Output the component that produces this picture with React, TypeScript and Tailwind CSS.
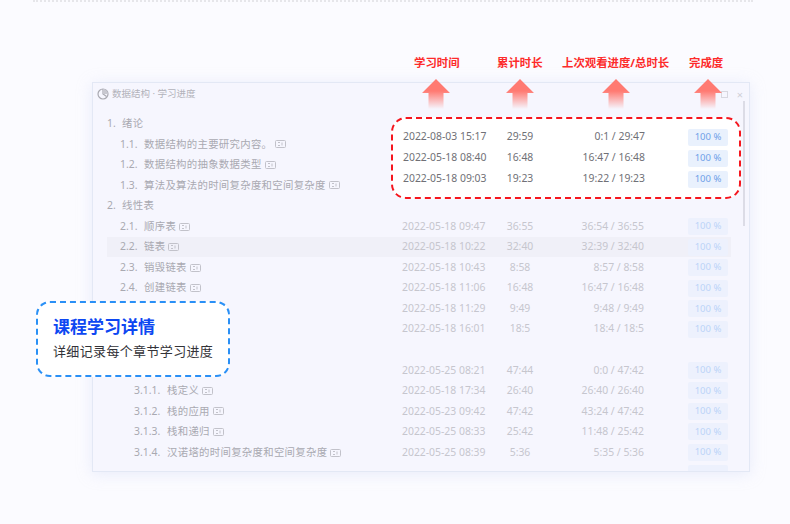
import React from "react";

const FONT = { fontFamily: '"Noto Sans", "Noto Sans CJK SC", sans-serif' };

type Row = {
  no?: string;
  label?: string;
  level: number;
  date?: string;
  dur?: string;
  prog?: string;
  active?: boolean;
  badgeOnly?: boolean;
  icon?: boolean;
};

const rows: Row[] = [
  { no: "1.", label: "绪论", level: 0 },
  { no: "1.1.", label: "数据结构的主要研究内容。", level: 1, icon: true },
  { no: "1.2.", label: "数据结构的抽象数据类型", level: 1, icon: true },
  { no: "1.3.", label: "算法及算法的时间复杂度和空间复杂度", level: 1, icon: true },
  { no: "2.", label: "线性表", level: 0 },
  { no: "2.1.", label: "顺序表", level: 1, icon: true, date: "2022-05-18 09:47", dur: "36:55", prog: "36:54 / 36:55" },
  { no: "2.2.", label: "链表", level: 1, icon: true, active: true, date: "2022-05-18 10:22", dur: "32:40", prog: "32:39 / 32:40" },
  { no: "2.3.", label: "销毁链表", level: 1, icon: true, date: "2022-05-18 10:43", dur: "8:58", prog: "8:57 / 8:58" },
  { no: "2.4.", label: "创建链表", level: 1, icon: true, date: "2022-05-18 11:06", dur: "16:48", prog: "16:47 / 16:48" },
  { level: 1, date: "2022-05-18 11:29", dur: "9:49", prog: "9:48 / 9:49" },
  { level: 1, date: "2022-05-18 16:01", dur: "18:5", prog: "18:4 / 18:5" },
  { level: 0 },
  { level: 1, date: "2022-05-25 08:21", dur: "47:44", prog: "0:0 / 47:42" },
  { no: "3.1.1.", label: "栈定义", level: 2, icon: true, date: "2022-05-18 17:34", dur: "26:40", prog: "26:40 / 26:40" },
  { no: "3.1.2.", label: "栈的应用", level: 2, icon: true, date: "2022-05-23 09:42", dur: "47:42", prog: "43:24 / 47:42" },
  { no: "3.1.3.", label: "栈和递归", level: 2, icon: true, date: "2022-05-25 08:33", dur: "25:42", prog: "11:48 / 25:42" },
  { no: "3.1.4.", label: "汉诺塔的时间复杂度和空间复杂度", level: 2, icon: true, date: "2022-05-25 08:39", dur: "5:36", prog: "5:35 / 5:36" },
  { level: 2, badgeOnly: true },
];

const highlighted = [
  { date: "2022-08-03 15:17", dur: "29:59", prog: "0:1 / 29:47" },
  { date: "2022-05-18 08:40", dur: "16:48", prog: "16:47 / 16:48" },
  { date: "2022-05-18 09:03", dur: "19:23", prog: "19:22 / 19:23" },
];

const headers = [
  { t: "学习时间", c: "left-[414px]" },
  { t: "累计时长", c: "left-[497px]" },
  { t: "上次观看进度/总时长", c: "left-[562px]" },
  { t: "完成度", c: "left-[689px]" },
];

const arrows = ["left-[422px]", "left-[506px]", "left-[602px]", "left-[694px]"];

function VideoIcon() {
  return (
    <svg width="11" height="8" viewBox="0 0 11 8" className="ml-[3px] shrink-0" fill="none">
      <rect x="0.5" y="0.5" width="10" height="7" rx="1" stroke="#c2c2ca" />
      <path d="M3 2.5h2M3 5.5h2M7 2.5v3" stroke="#c2c2ca" />
    </svg>
  );
}

function Arrow({ id }: { id: string }) {
  return (
    <svg width="28" height="30" viewBox="0 0 28 30">
      <defs>
        <linearGradient id={id} x1="0" y1="0" x2="0" y2="1">
          <stop offset="0.4" stopColor="#ff7a72" />
          <stop offset="1" stopColor="#ff7a72" stopOpacity="0" />
        </linearGradient>
      </defs>
      <path d="M14 0 L28 14 H21.5 V30 H6.5 V14 H0 Z" fill={`url(#${id})`} />
    </svg>
  );
}

export default function App() {
  return (
    <div
      className="relative w-[790px] h-[524px] overflow-hidden bg-[#fbfbff] flex flex-col"
      style={FONT}
    >
      <div className="mx-[33px] w-[720px] border-t-2 border-dotted border-[#e6e6ea]" />

      {/* main window */}
      <div className="ml-[92px] mt-[80px] w-[658px] h-[390px] overflow-hidden bg-[#f6f6fe] border border-[#e3e8f5] shadow-[0_2px_14px_rgba(200,210,240,0.35)] flex flex-col relative">
        <div className="h-[20px] shrink-0 flex items-center pl-[4px] pr-[6px] mt-[1px]">
          <svg width="12" height="12" viewBox="0 0 12 12" fill="none">
            <circle cx="6" cy="6" r="5" stroke="#a9a9b1" strokeWidth="1.2" />
            <path d="M6 1v5l3.6 2.6" stroke="#a9a9b1" strokeWidth="1.2" />
            <path d="M6 1a5 5 0 0 1 5 5H6Z" fill="#c8c8d0" />
          </svg>
          <span className="ml-[3px] text-[9.5px] text-[#b2b2ba]">数据结构 · 学习进度</span>
          <span className="ml-auto mr-[9px] w-[7px] h-[7px] border border-[#d8d8e0]" />
          <span className="text-[11px] leading-none text-[#d0d0d8]">×</span>
        </div>

        <div className="flex flex-col mt-[9.5px] ml-[14px] w-[624px]">
          {rows.map((r, i) => (
            <div
              key={i}
              className={`h-[20.55px] shrink-0 flex items-center text-[10.4px] ${r.active ? "bg-[#f0f0f8]" : ""}`}
            >
              <div className="w-[295px] shrink-0 flex items-center text-[#a9a9b1]">
                {r.level === 0 && r.no && (
                  <>
                    <span className="w-[15px]">{r.no}</span>
                    <span className="tracking-[0.3px]">{r.label}</span>
                  </>
                )}
                {r.level === 1 && r.no && (
                  <>
                    <span className="ml-[13px] w-[24px]">{r.no}</span>
                    <span className="tracking-[0.3px]">{r.label}</span>
                  </>
                )}
                {r.level === 2 && r.no && (
                  <>
                    <span className="ml-[27px] w-[33px]">{r.no}</span>
                    <span className="tracking-[0.3px]">{r.label}</span>
                  </>
                )}
                {r.icon && <VideoIcon />}
              </div>
              {r.date && (
                <>
                  <span className="w-[93px] shrink-0 text-[#c6c6ce]">{r.date}</span>
                  <span className="w-[50px] shrink-0 text-center text-[#c6c6ce]">{r.dur}</span>
                  <span className="w-[99px] shrink-0 text-right text-[#c6c6ce]">{r.prog}</span>
                  <span className="ml-[44px] w-[40px] h-[17px] shrink-0 rounded-[2px] bg-[#edf1fd] text-[#bcd4f8] text-[9.5px] flex items-center justify-center">
                    100 %
                  </span>
                </>
              )}
              {r.badgeOnly && (
                <span className="ml-[286px] w-[40px] h-[17px] shrink-0 rounded-[2px] bg-[#edf1fd]" />
              )}
            </div>
          ))}
        </div>

        {/* scrollbar */}
        <div className="absolute top-[18px] right-[4px] w-[2px] h-[125px] bg-[#dcdce6]" />
      </div>

      {/* column labels */}
      {headers.map((h) => (
        <span
          key={h.t}
          className={`absolute top-[55px] text-[11.4px] leading-[16px] font-bold text-[#fd2b2b] whitespace-nowrap ${h.c}`}
        >
          {h.t}
        </span>
      ))}

      {/* arrows */}
      {arrows.map((c, i) => (
        <div key={c} className={`absolute top-[79px] h-[30px] ${c}`}>
          <Arrow id={`arrow-${i}`} />
        </div>
      ))}

      {/* highlighted rows */}
      <div className="absolute left-[391px] top-[117px] w-[350px] h-[82px] rounded-[15px] border-2 border-dashed border-[#f5161e] bg-white flex flex-col justify-center text-[10.4px] text-[#707076]">
        {highlighted.map((r) => (
          <div key={r.date} className="h-[21px] flex items-center pl-[10px]">
            <span className="w-[92px] shrink-0">{r.date}</span>
            <span className="w-[50px] shrink-0 text-center">{r.dur}</span>
            <span className="w-[100px] shrink-0 text-right">{r.prog}</span>
            <span className="ml-[43px] w-[40px] h-[17px] shrink-0 rounded-[2px] bg-[#e9f1fd] text-[#6f9fe8] text-[9.5px] flex items-center justify-center">
              100 %
            </span>
          </div>
        ))}
      </div>

      {/* callout */}
      <div className="absolute left-[36px] top-[301px] w-[194px] h-[76px] rounded-[14px] border-2 border-dashed border-[#2a90f6] bg-white pl-[15px] flex flex-col">
        <span className="mt-[12px] text-[17px] leading-[24px] font-bold text-[#0d47f2] whitespace-nowrap">
          课程学习详情
        </span>
        <span className="mt-[3px] text-[13px] leading-[18px] tracking-[0.35px] text-[#333338] whitespace-nowrap">
          详细记录每个章节学习进度
        </span>
      </div>
    </div>
  );
}
